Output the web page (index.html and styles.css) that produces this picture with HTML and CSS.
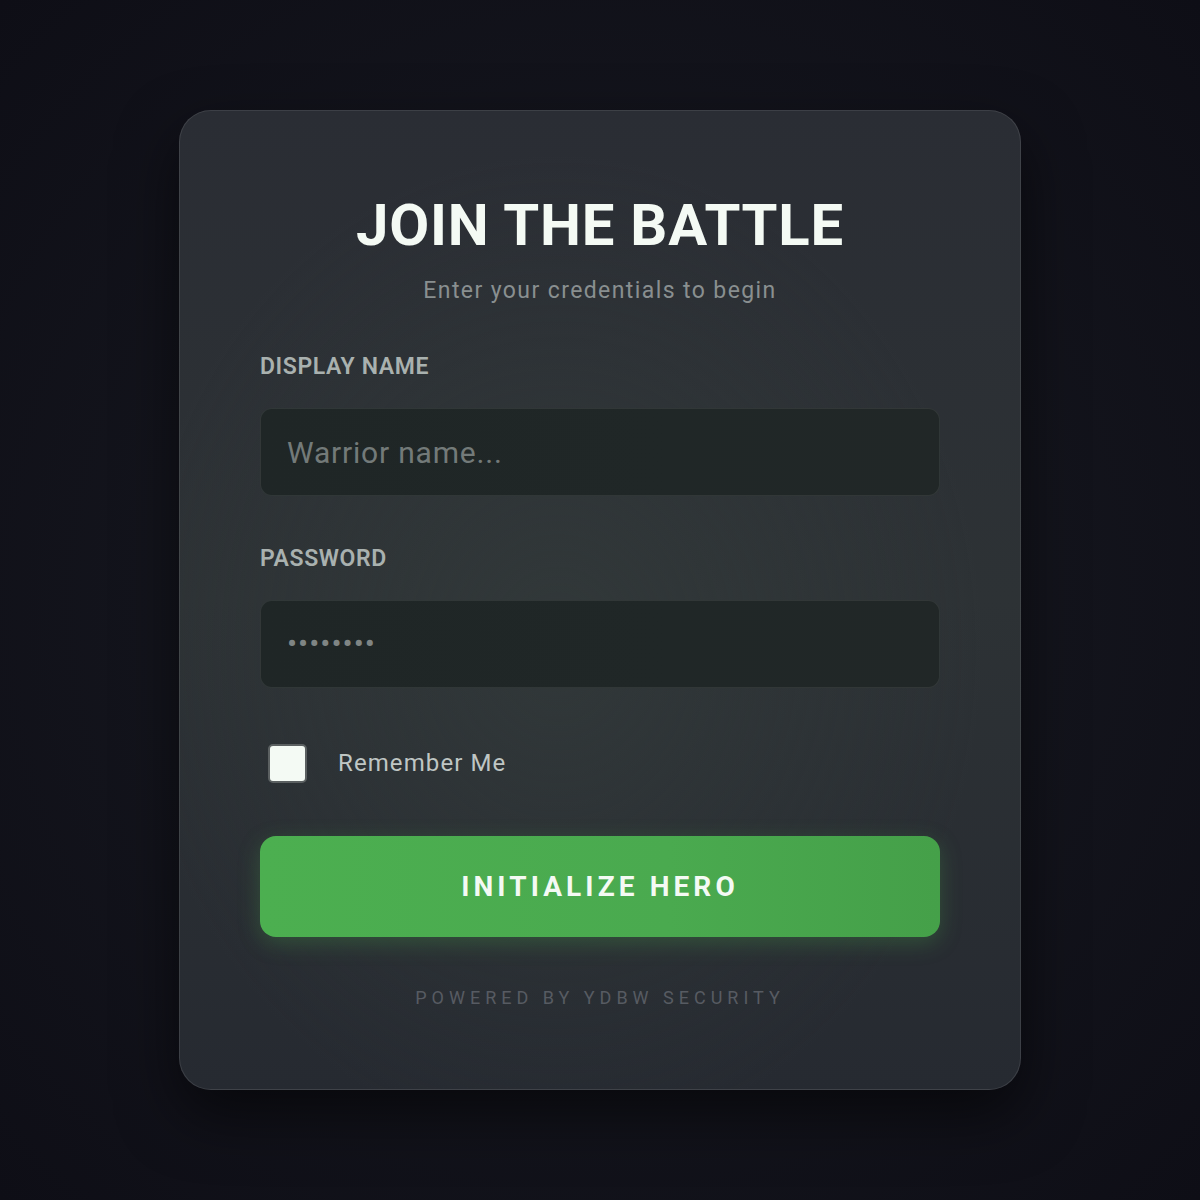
FILE: index.html
```html
<!DOCTYPE html>
<html lang="en">
<head>
<meta charset="utf-8">
<title>Join the Battle</title>
<link rel="stylesheet" href="styles.css">
</head>
<body>
<main class="stage">
  <form class="card">
    <h1 class="title">JOIN THE BATTLE</h1>
    <p class="subtitle">Enter your credentials to begin</p>

    <div class="field">
      <label class="label" for="name">DISPLAY NAME</label>
      <div class="input"><span class="placeholder">Warrior name...</span></div>
    </div>

    <div class="field">
      <label class="label" for="pw">PASSWORD</label>
      <div class="input"><span class="dots">&#8226;&#8226;&#8226;&#8226;&#8226;&#8226;&#8226;&#8226;</span></div>
    </div>

    <div class="remember">
      <span class="checkbox"></span>
      <span class="remember-text">Remember Me</span>
    </div>

    <div class="button">INITIALIZE HERO</div>

    <p class="footer">POWERED BY YDBW SECURITY</p>
  </form>
</main>
</body>
</html>
```

FILE: styles.css
```css
html, body {
  margin: 0;
  padding: 0;
}

body {
  width: 1200px;
  height: 1200px;
  background: radial-gradient(ellipse at 50% 50%, #1b1e25 0%, #14151d 45%, #0e0e16 100%);
  font-family: Roboto, "Liberation Sans", Arial, sans-serif;
  overflow: hidden;
}

.stage {
  height: 1200px;
  display: flex;
  align-items: center;
  justify-content: center;
}

.card {
  box-sizing: border-box;
  width: 842px;
  padding: 80px 80px 80px;
  border: 1px solid rgba(255, 255, 255, 0.1);
  border-radius: 32px;
  background:
    radial-gradient(ellipse at 45% 55%, rgba(52, 60, 60, 0.6) 0%, rgba(46, 52, 54, 0) 65%),
    linear-gradient(180deg, #2a2d34 0%, #2d3235 50%, #262a31 100%);
  box-shadow: 0 25px 60px rgba(0, 0, 0, 0.55);
  display: flex;
  flex-direction: column;
}

.title {
  margin: 0;
  font-size: 58px;
  line-height: 68px;
  font-weight: 700;
  letter-spacing: 0.8px;
  color: #f4faf4;
  text-align: center;
}

.subtitle {
  margin: 19px 0 0;
  font-size: 23px;
  line-height: 26px;
  letter-spacing: 1.4px;
  color: #898f90;
  text-align: center;
}

.field {
  display: flex;
  flex-direction: column;
  margin-top: 50px;
}

.label {
  font-size: 23px;
  line-height: 26px;
  font-weight: 600;
  letter-spacing: 0.6px;
  color: #a9b1af;
}

.input {
  box-sizing: border-box;
  margin-top: 28px;
  height: 88px;
  border: 1px solid rgba(255, 255, 255, 0.08);
  border-radius: 12px;
  background: linear-gradient(90deg, #1f2626 0%, #202727 60%, #212727 100%);
  padding: 0 26px;
  display: flex;
  align-items: center;
}

.placeholder {
  font-size: 30px;
  letter-spacing: 0.8px;
  color: #737a79;
}

.dots {
  font-size: 30px;
  letter-spacing: 1px;
  color: #7f8584;
  position: relative;
  top: -1px;
}

.remember {
  margin-top: 55px;
  display: flex;
  align-items: center;
  height: 40px;
}

.checkbox {
  box-sizing: border-box;
  margin-left: 8px;
  width: 39px;
  height: 39px;
  border: 2px solid #5b6061;
  border-radius: 5px;
  background: #f4faf4;
}

.remember-text {
  margin-left: 31px;
  font-size: 24px;
  letter-spacing: 1.1px;
  color: #bfc6c4;
}

.button {
  margin-top: 53px;
  height: 101px;
  border-radius: 16px;
  background: linear-gradient(90deg, #4caf50 0%, #4aaa4f 60%, #45a049 100%);
  box-shadow: 0 6px 22px rgba(76, 175, 80, 0.28);
  display: flex;
  align-items: center;
  justify-content: center;
  font-size: 28px;
  font-weight: 700;
  letter-spacing: 4.1px;
  color: #f4faf4;
}

.footer {
  margin: 50px 0 0;
  font-size: 18px;
  line-height: 22px;
  letter-spacing: 5px;
  color: #575b62;
  text-align: center;
}
```
